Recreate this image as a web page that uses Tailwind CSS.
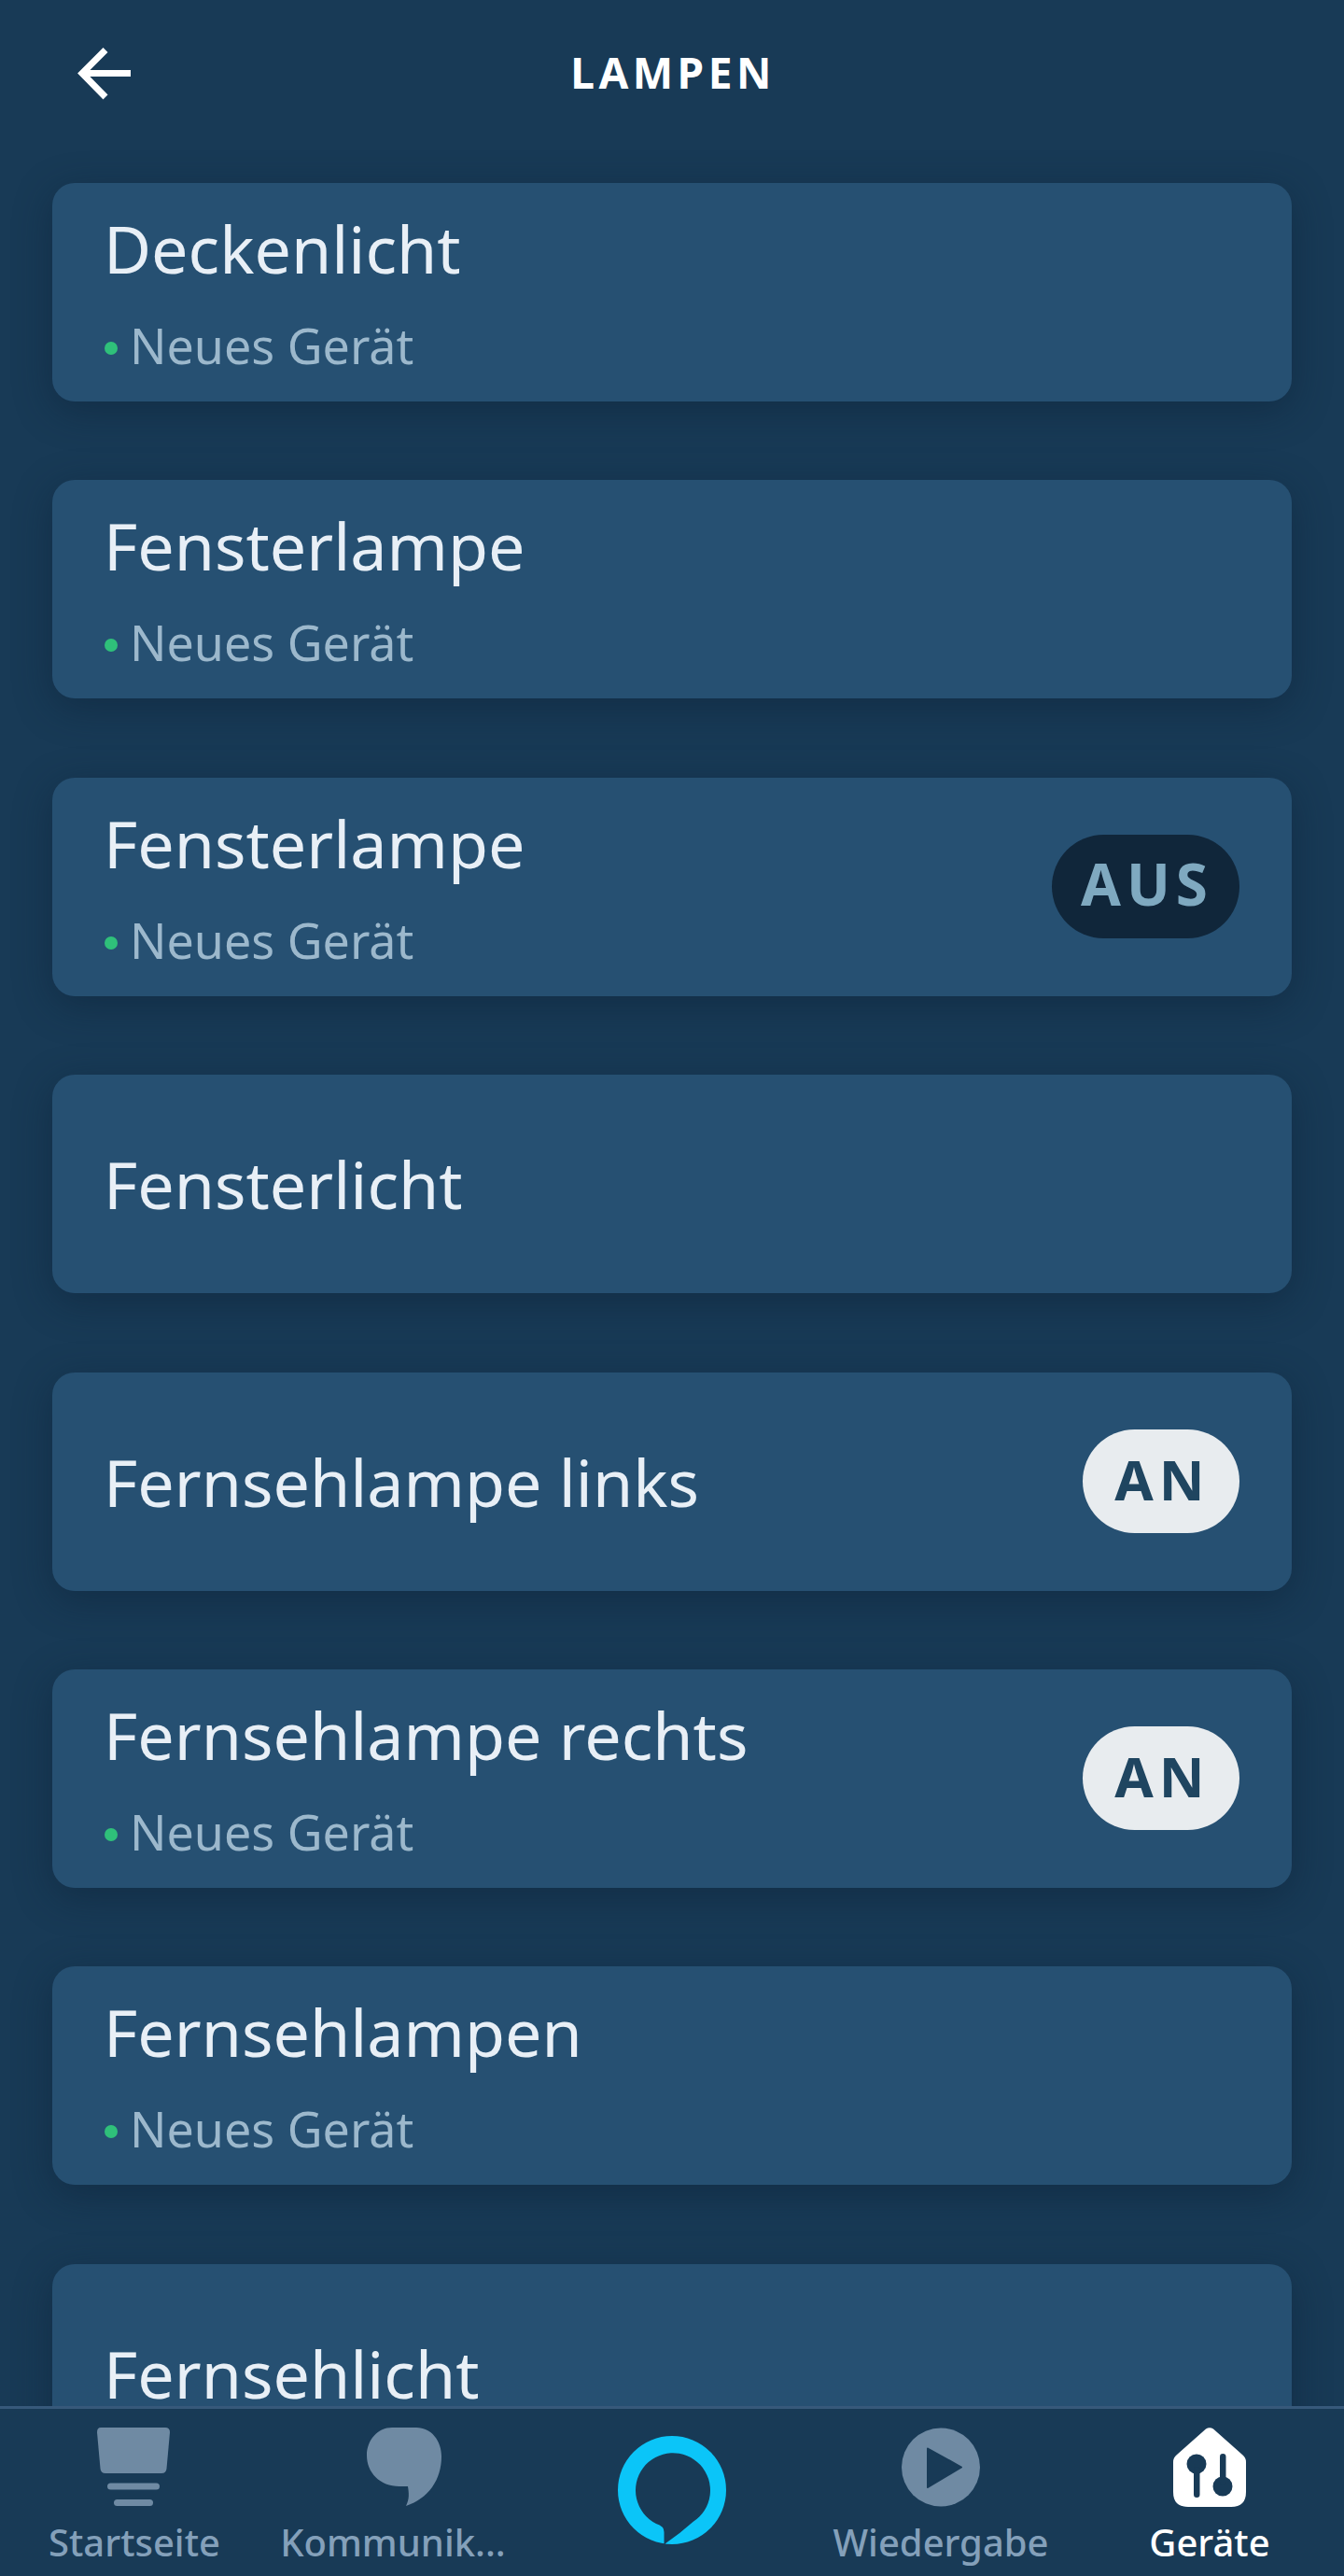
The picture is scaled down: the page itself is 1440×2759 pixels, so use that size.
<!DOCTYPE html>
<html lang="de">
<head>
  <meta charset="UTF-8" />
  <title>Lampen</title>
  <script src="https://cdn.jsdelivr.net/npm/@tailwindcss/browser@4"></script>
</head>
<body class="bg-[#183a56]">
  <div class="w-[1440px] h-[2759px] flex flex-col overflow-hidden bg-[#183a56] font-['Noto_Sans',sans-serif]">
    <!-- Header -->
    <header class="relative h-[156px] shrink-0 flex items-center justify-center pb-[2px]">
      <svg class="absolute left-[82px] top-[50px]" width="60" height="58" viewBox="0 0 60 58" fill="none" stroke="#fff" stroke-width="7">
        <path d="M58 28.500H6" />
        <path d="M31 3.500L6 28.500L31 54" />
      </svg>
      <h1 class="text-[46px] leading-none font-bold tracking-[4.5px] text-white ml-[2px]">LAMPEN</h1>
    </header>

    <!-- Device list -->
    <main class="relative flex-1 overflow-hidden px-[56px] pt-[40px] flex flex-col gap-[84.4px]">
      <div class="h-[234px] shrink-0 rounded-[24px] bg-[#265072] shadow-[0_10px_40px_rgba(10,30,50,0.45)] flex items-center justify-between pl-[55px] pr-[56px]">
        <div>
          <p class="text-[70px] leading-[80px] text-[#e8eff6]">Deckenlicht</p>
          <p class="mt-[34px] flex items-center text-[52px] leading-[60px] text-[#9cb8cc]"><span class="w-[14px] h-[14px] rounded-full bg-[#2fc07a] mr-[13px] ml-[1px] mt-[6px]"></span>Neues Gerät</p>
        </div>
      </div>
      <div class="h-[234px] shrink-0 rounded-[24px] bg-[#265072] shadow-[0_10px_40px_rgba(10,30,50,0.45)] flex items-center justify-between pl-[55px] pr-[56px]">
        <div>
          <p class="text-[70px] leading-[80px] text-[#e8eff6]">Fensterlampe</p>
          <p class="mt-[34px] flex items-center text-[52px] leading-[60px] text-[#9cb8cc]"><span class="w-[14px] h-[14px] rounded-full bg-[#2fc07a] mr-[13px] ml-[1px] mt-[6px]"></span>Neues Gerät</p>
        </div>
      </div>
      <div class="h-[234px] shrink-0 rounded-[24px] bg-[#265072] shadow-[0_10px_40px_rgba(10,30,50,0.45)] flex items-center justify-between pl-[55px] pr-[56px]">
        <div>
          <p class="text-[70px] leading-[80px] text-[#e8eff6]">Fensterlampe</p>
          <p class="mt-[34px] flex items-center text-[52px] leading-[60px] text-[#9cb8cc]"><span class="w-[14px] h-[14px] rounded-full bg-[#2fc07a] mr-[13px] ml-[1px] mt-[6px]"></span>Neues Gerät</p>
        </div>
        <span class="w-[201px] h-[111px] rounded-full bg-[#10263a] flex items-center justify-center pb-[6px] pl-[3px] text-[62px] font-bold tracking-[6px] text-[#7fa9c0]">AUS</span>
      </div>
      <div class="h-[234px] shrink-0 rounded-[24px] bg-[#265072] shadow-[0_10px_40px_rgba(10,30,50,0.45)] flex items-center justify-between pl-[55px] pr-[56px]">
        <p class="text-[70px] leading-[80px] text-[#e8eff6]">Fensterlicht</p>
      </div>
      <div class="h-[234px] shrink-0 rounded-[24px] bg-[#265072] shadow-[0_10px_40px_rgba(10,30,50,0.45)] flex items-center justify-between pl-[55px] pr-[56px]">
        <p class="text-[70px] leading-[80px] text-[#e8eff6]">Fernsehlampe links</p>
        <span class="w-[168px] h-[111px] rounded-full bg-[#e8ecef] flex items-center justify-center pb-[6px] pl-[3px] text-[60px] font-bold tracking-[6px] text-[#1f4560]">AN</span>
      </div>
      <div class="h-[234px] shrink-0 rounded-[24px] bg-[#265072] shadow-[0_10px_40px_rgba(10,30,50,0.45)] flex items-center justify-between pl-[55px] pr-[56px]">
        <div>
          <p class="text-[70px] leading-[80px] text-[#e8eff6]">Fernsehlampe rechts</p>
          <p class="mt-[34px] flex items-center text-[52px] leading-[60px] text-[#9cb8cc]"><span class="w-[14px] h-[14px] rounded-full bg-[#2fc07a] mr-[13px] ml-[1px] mt-[6px]"></span>Neues Gerät</p>
        </div>
        <span class="w-[168px] h-[111px] rounded-full bg-[#e8ecef] flex items-center justify-center pb-[6px] pl-[3px] text-[60px] font-bold tracking-[6px] text-[#1f4560]">AN</span>
      </div>
      <div class="h-[234px] shrink-0 rounded-[24px] bg-[#265072] shadow-[0_10px_40px_rgba(10,30,50,0.45)] flex items-center justify-between pl-[55px] pr-[56px]">
        <div>
          <p class="text-[70px] leading-[80px] text-[#e8eff6]">Fernsehlampen</p>
          <p class="mt-[34px] flex items-center text-[52px] leading-[60px] text-[#9cb8cc]"><span class="w-[14px] h-[14px] rounded-full bg-[#2fc07a] mr-[13px] ml-[1px] mt-[6px]"></span>Neues Gerät</p>
        </div>
      </div>
      <div class="h-[234px] shrink-0 rounded-[24px] bg-[#265072] shadow-[0_10px_40px_rgba(10,30,50,0.45)] flex items-center justify-between pl-[55px] pr-[56px]">
        <p class="text-[70px] leading-[80px] text-[#e8eff6]">Fernsehlicht</p>
      </div>
    </main>

    <!-- Bottom nav -->
    <nav class="h-[182px] shrink-0 grid grid-cols-5 border-t-[3px] border-[#37597a] bg-[#183a56] text-[40px] leading-[48px] font-medium text-[#84a0ba]">
      <div class="flex flex-col items-center pt-[20px]">
        <svg width="78" height="85" viewBox="0 0 78 85" class="mr-[2px]" fill="#6f8aa3">
          <path d="M4 0H73Q78 0 78 5L74.500 44Q74 49 69 49H9Q4 49 3.500 44L0 5Q0 0 4 0Z" />
          <rect x="11" y="59.500" width="56" height="7" rx="3.500" />
          <rect x="18" y="77" width="42" height="7" rx="3.500" />
        </svg>
        <span class="mt-[14px]">Startseite</span>
      </div>
      <div class="flex flex-col items-center pt-[20px]">
        <svg width="80" height="85" viewBox="0 0 80 85" class="ml-[2px]" fill="#6f8aa3">
          <path d="M27 0H53C69 0 80 14 80 31C80 56 66 76 42 84C46 76 45 70 44 63H35C14 63 0 48 0 30C0 13 12 0 27 0Z" />
        </svg>
        <span class="mt-[14px] mr-[22px]">Kommunik...</span>
      </div>
      <div class="flex justify-center pt-[29px]">
        <svg width="116" height="116" viewBox="0 0 116 116">
          <path fill="#0bc5f8" fill-rule="evenodd" d="M58 0A58 58 0 1 1 58 116A58 58 0 1 1 58 0ZM49.500 115.500V103Q49.500 96.500 41 94A40 40 0 1 1 80.500 92Q66 105 50.500 115.500Z" />
        </svg>
      </div>
      <div class="flex flex-col items-center pt-[20px]">
        <svg width="84" height="85" viewBox="0 0 84 85">
          <circle cx="42" cy="42.500" r="42" fill="#6f8aa3" />
          <path d="M28 22.500L64 42.500L28 64Z" fill="#183a56" stroke="#183a56" stroke-width="2" stroke-linejoin="round" />
        </svg>
        <span class="mt-[14px]">Wiedergabe</span>
      </div>
      <div class="flex flex-col items-center pt-[20px] text-white">
        <svg width="78" height="85" viewBox="0 0 78 85">
          <path fill="#fff" d="M35 1.500Q39 -1 43 1.500L74 29Q78 32 78 37V69Q78 85 62 85H16Q0 85 0 69V37Q0 32 4 29Z" />
          <circle cx="25" cy="39" r="10.500" fill="#183a56" />
          <rect x="22" y="42" width="6.500" height="33" rx="3.250" fill="#183a56" />
          <circle cx="53" cy="63" r="10.500" fill="#183a56" />
          <rect x="50" y="28" width="6.500" height="33" rx="3.250" fill="#183a56" />
        </svg>
        <span class="mt-[14px]">Geräte</span>
      </div>
    </nav>
  </div>
</body>
</html>
